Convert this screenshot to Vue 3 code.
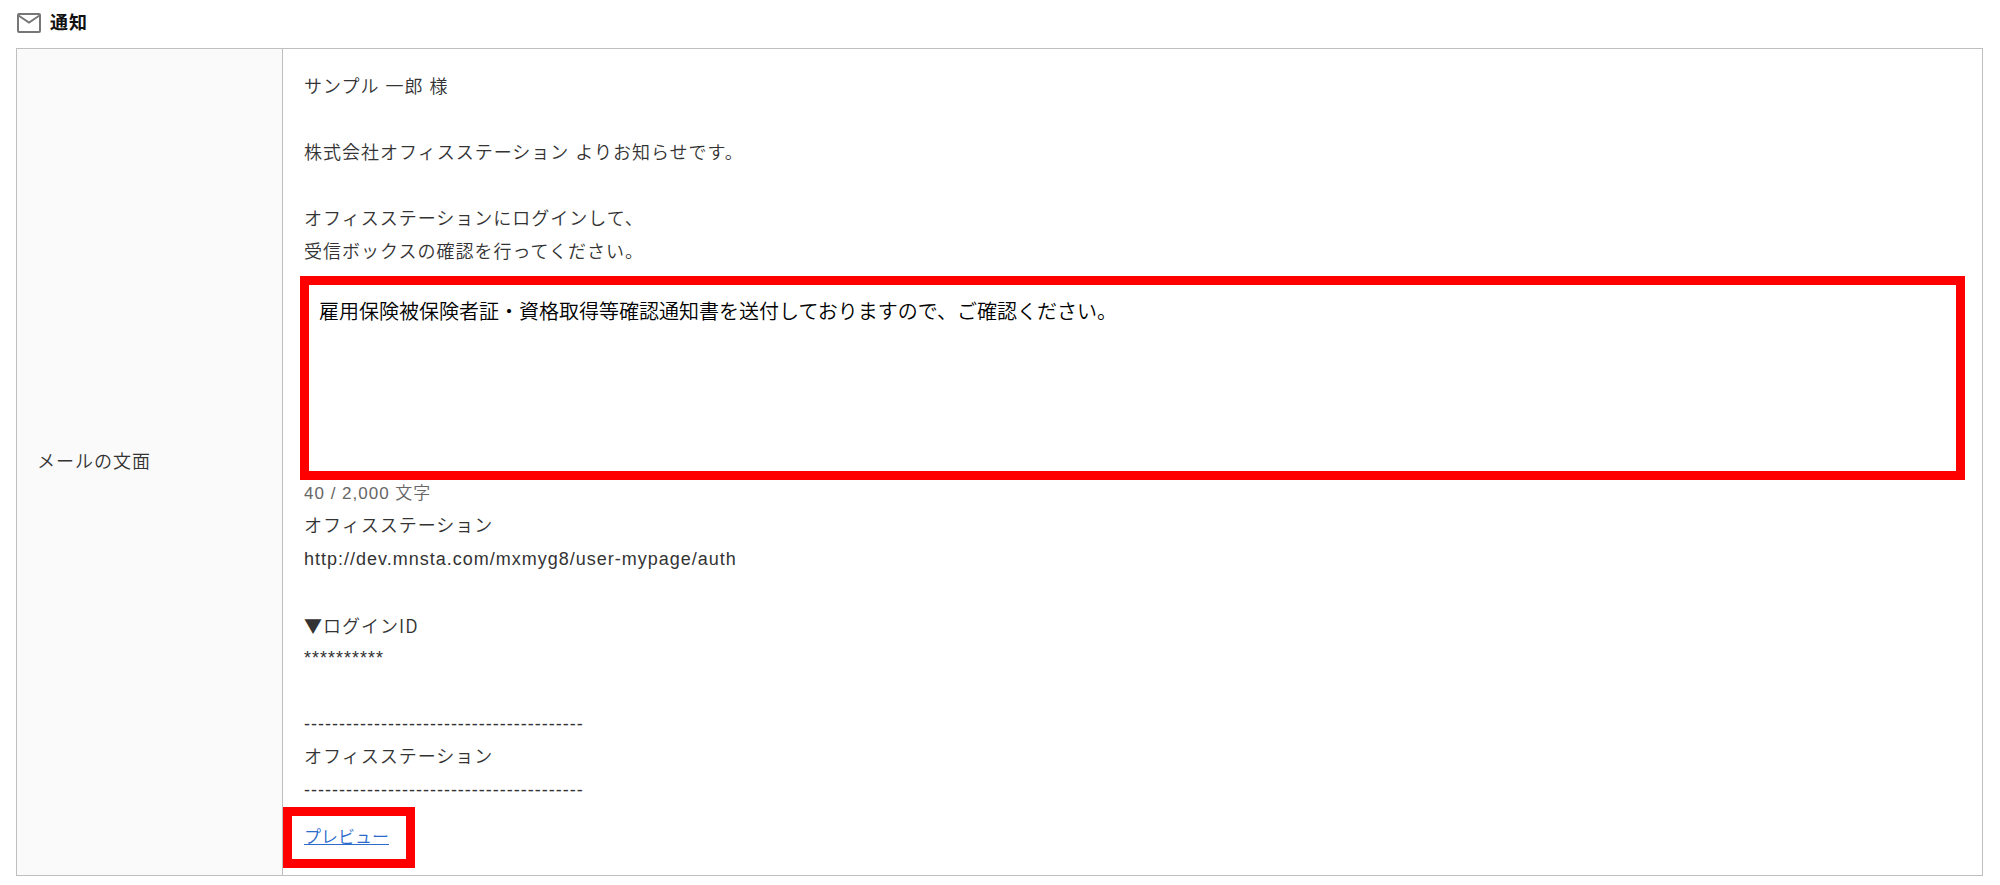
<script setup>
import { ref, computed } from 'vue'

const message = ref('雇用保険被保険者証・資格取得等確認通知書を送付しておりますので、ご確認ください。')
const limit = (2000).toLocaleString('en-US')
const count = computed(() => message.value.length)
const rule = '-'.repeat(40)
const intro = `サンプル 一郎 様

株式会社オフィスステーション よりお知らせです。

オフィスステーションにログインして、
受信ボックスの確認を行ってください。`
const site = `オフィスステーション
http://dev.mnsta.com/mxmyg8/user-mypage/auth

`
const signature = `**********

${rule}
オフィスステーション
${rule}`
</script>

<template>
  <main class="page">
    <h1 class="heading">
      <svg class="icon" viewBox="0 0 24 20" aria-hidden="true">
        <rect x="1" y="1" width="22" height="18" rx="1" />
        <path d="M1.5 2.5 12 9.5 22.5 2.5" />
      </svg>
      通知
    </h1>
    <table class="form">
      <tbody>
        <tr>
          <th scope="row"><label for="mail-body">メールの文面</label></th>
          <td>
            <p class="text">{{ intro }}</p>
            <textarea id="mail-body" v-model="message" class="message"></textarea>
            <p class="count">{{ count }} / {{ limit }} 文字</p>
            <p class="text">{{ site }}</p>
            <p class="text login">▼ログインID</p>
            <p class="text">{{ signature }}</p>
            <div class="preview"><a href="#preview">プレビュー</a></div>
          </td>
        </tr>
      </tbody>
    </table>
  </main>
</template>

<style>
body {
  margin: 0;
  background: #fff;
}
</style>

<style scoped>
.page {
  padding: 5px 17px 10px 16px;
  font-family: "Liberation Sans", "Noto Sans CJK JP", sans-serif;
  font-size: 18px;
  font-weight: 350;
  letter-spacing: 1px;
  line-height: 33px;
  color: #333;
}
.heading {
  display: flex;
  align-items: center;
  gap: 9px;
  height: 36px;
  margin: 0 0 7px 1px;
  font-size: 18px;
  font-weight: 700;
  color: #111;
}
.icon {
  width: 24px;
  height: 20px;
  fill: none;
  stroke: #777;
  stroke-width: 2;
}
.form {
  width: 100%;
  border-collapse: collapse;
}
.form th,
.form td {
  border: 1px solid #bfbfbf;
}
.form th {
  box-sizing: border-box;
  width: 266px;
  padding: 0 20px;
  background: #fafafa;
  font-weight: 350;
  text-align: left;
}
.form td {
  padding: 22px 21px 7px;
}
.text {
  margin: 0;
  white-space: pre-wrap;
}
.login {
  font-family: "Noto Sans CJK JP", sans-serif;
}
.message {
  display: block;
  box-sizing: border-box;
  width: calc(100% + 8px);
  height: 204px;
  margin: 7px -4px 0;
  padding: 10px;
  border: 9px solid #f00;
  outline: none;
  background: #fff;
  color: #000;
  font-family: "Noto Sans CJK JP", sans-serif;
  font-size: 20px;
  font-weight: 350;
  line-height: 32px;
  resize: none;
}
.count {
  margin: 0;
  padding-bottom: 3px;
  font-size: 17px;
  line-height: 27px;
  color: #666;
}
.preview {
  display: flex;
  align-items: center;
  box-sizing: border-box;
  width: 132px;
  height: 61px;
  margin-left: -21px;
  padding: 0 12px;
  border: 9px solid #f00;
}
.preview a {
  color: #2a6bcb;
  font-size: 17px;
  letter-spacing: normal;
  text-decoration: underline;
}
</style>
